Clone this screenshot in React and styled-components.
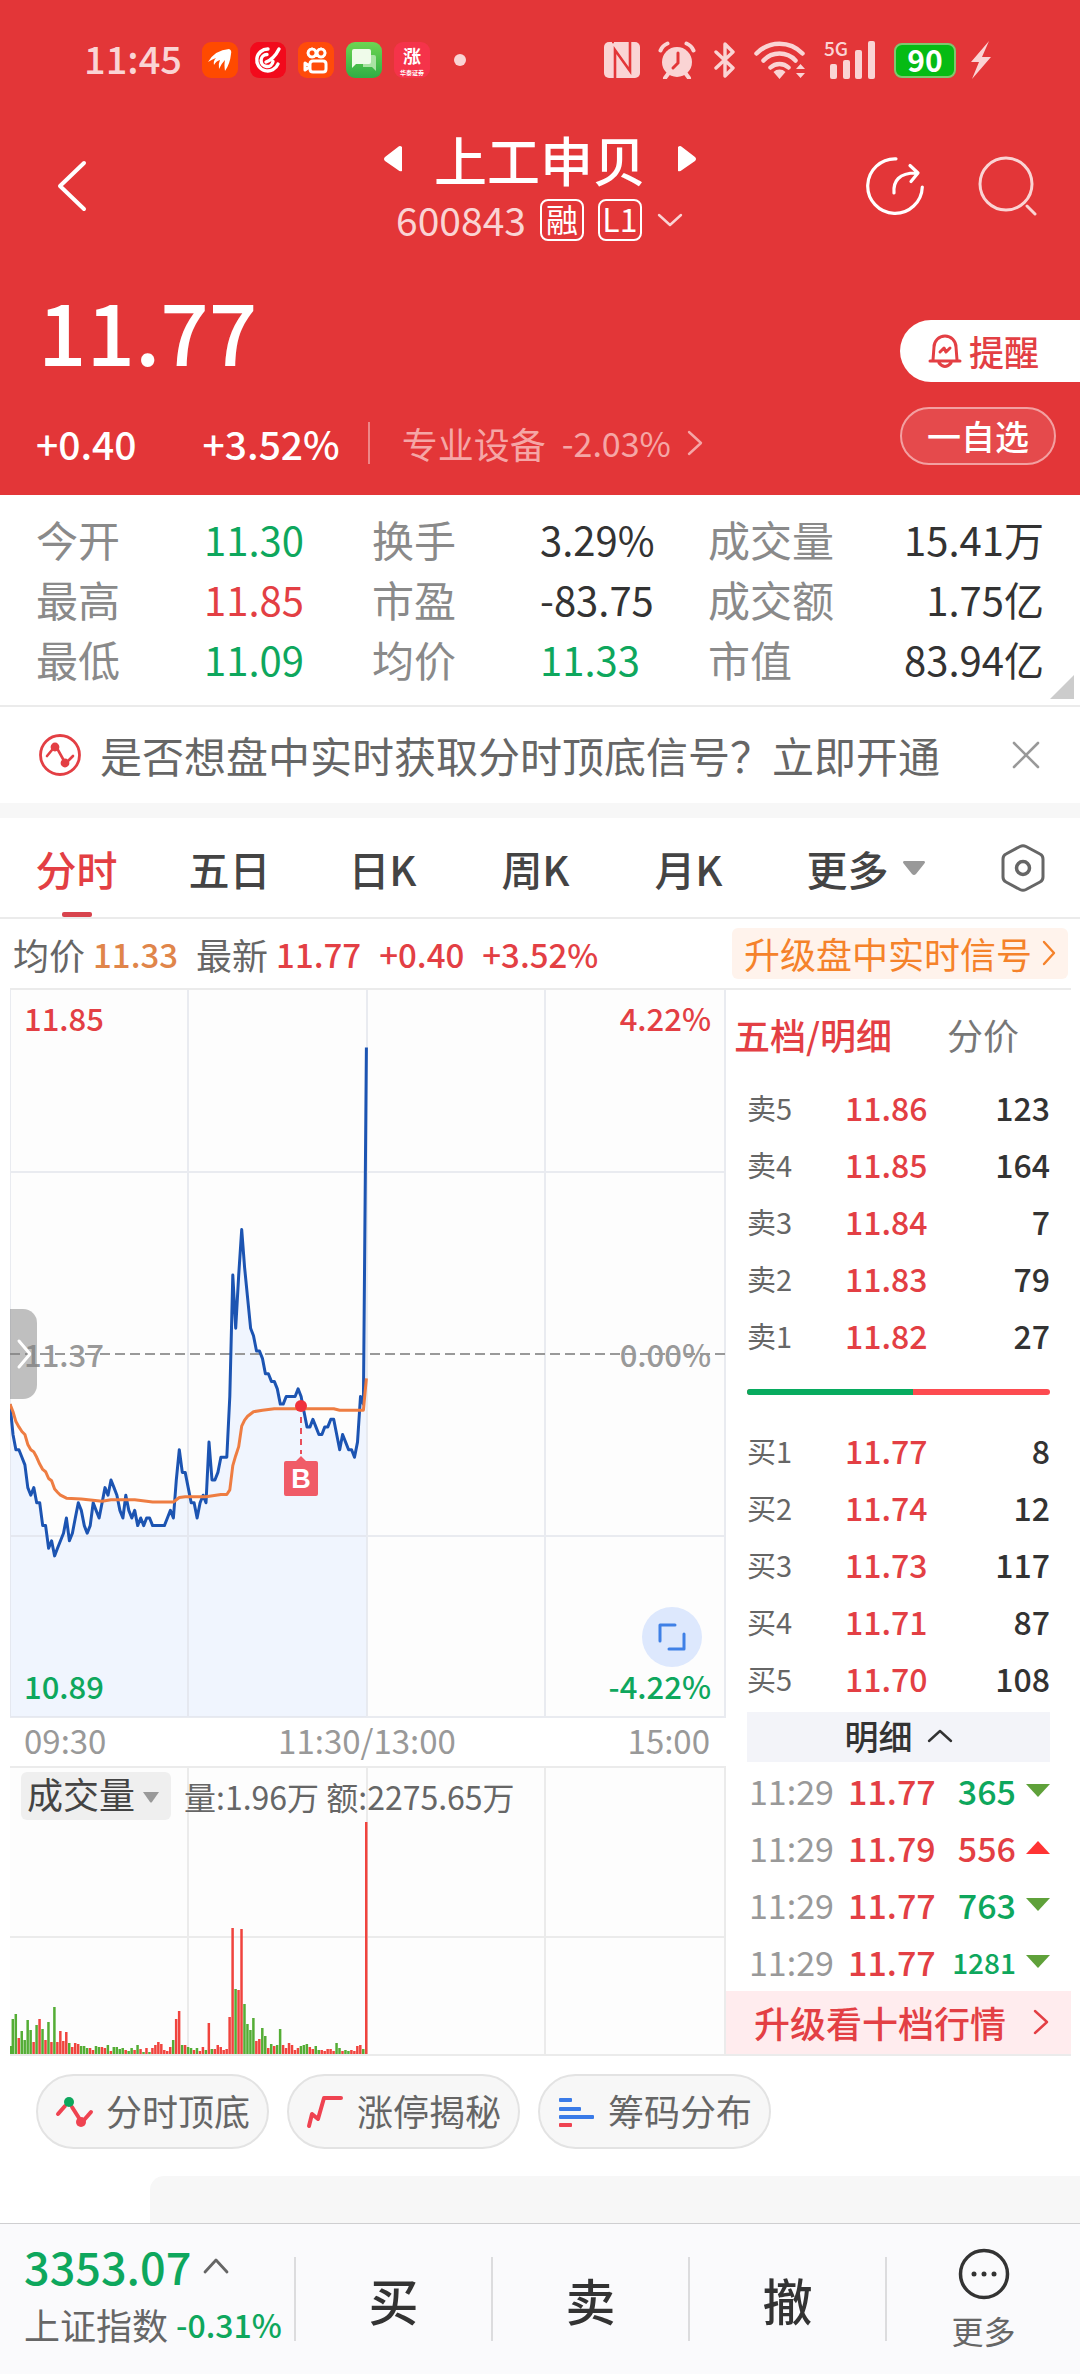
import React from "react";
import styled, { createGlobalStyle, css } from "styled-components";

const red = "#e33f44";
const green = "#0ea75d";
const line = "#ebebeb";
const pale = "#fad4d4";

const GlobalStyle = createGlobalStyle`
  *, *::before, *::after { box-sizing: border-box; }
  body { margin: 0; background: #fff; }
  body, button, select {
    font-family: "Noto Sans CJK SC", "Noto Sans", sans-serif;
    color: #333;
  }
  button { border: 0; padding: 0; background: none; cursor: pointer; }
  h1, p, dl, dd, dt { margin: 0; font-weight: 400; }
  a { text-decoration: none; color: inherit; }
  svg { display: block; flex: none; }
`;

const tones = {
  red,
  green,
  dark: "#333",
  grey: "#8a8a8a",
  mid: "#666",
  light: "#999",
  orange: "#e0854a",
};

const Page = styled.div`
  min-height: 100vh;
  display: flex;
  flex-direction: column;
`;

/* ---------- header ---------- */

const Header = styled.header`
  background: #e33638;
  color: #fff;
`;

const StatusBar = styled.div`
  height: 120px;
  padding: 0 88px 0 84px;
  display: flex;
  align-items: center;
  justify-content: space-between;
  color: ${pale};
`;

const StatusGroup = styled.div`
  display: flex;
  align-items: center;
  gap: ${(p) => p.$gap}px;
`;

const Clock = styled.span`
  font-size: 38px;
  line-height: 48px;
  font-weight: 500;
  margin-right: 8px;
  padding-bottom: 4px;
`;

const AppIcon = styled.span`
  width: 36px;
  height: 36px;
  border-radius: 9px;
  background: ${(p) => p.$bg};
  color: #fff;
  display: flex;
  flex-direction: column;
  align-items: center;
  justify-content: center;
  font-weight: 700;
`;

const AppGlyph = styled.span`
  font-size: 18px;
  line-height: 26px;
`;

const AppCaption = styled.span`
  font-size: 6px;
  line-height: 10px;
`;

const MoreDot = styled.span`
  width: 12px;
  height: 12px;
  border-radius: 50%;
  margin-left: 12px;
  background: ${pale};
`;

const Signal = styled.span`
  display: flex;
  align-items: flex-start;
  position: relative;
`;

const SignalLabel = styled.span`
  position: absolute;
  left: 0;
  top: -4px;
  font-size: 19px;
  line-height: 22px;
  font-weight: 500;
`;

const Battery = styled.span`
  width: 62px;
  height: 35px;
  border-radius: 8px;
  border: 2px solid #7fc76f;
  background: #06bb14;
  color: #fff;
  font-size: 30px;
  line-height: 28px;
  font-weight: 700;
  text-align: center;
`;

const TitleBar = styled.div`
  height: 132px;
  padding: 0 42px;
  display: grid;
  grid-template-columns: 1fr auto 1fr;
  align-items: center;
`;

const IconButton = styled.button`
  display: flex;
  align-items: center;
  justify-content: center;
  color: inherit;
`;

const BackSlot = styled.div`
  padding-left: 12px;
`;

const TitleBlock = styled.div`
  display: flex;
  flex-direction: column;
  align-items: center;
  gap: 10px;
`;

const TitleRow = styled.div`
  display: flex;
  align-items: center;
  gap: 32px;
`;

const Title = styled.h1`
  font-size: 53px;
  line-height: 58px;
  && { font-weight: 500; }
`;

const CodeRow = styled.div`
  display: flex;
  align-items: center;
  gap: 14px;
`;

const Code = styled.span`
  font-size: 39px;
  line-height: 42px;
  color: ${pale};
  padding-bottom: 2px;
`;

const Badge = styled.span`
  width: 44px;
  height: 42px;
  border: 2px solid #fff;
  border-radius: 8px;
  font-size: 32px;
  line-height: 34px;
  text-align: center;
`;

const Actions = styled.div`
  display: flex;
  justify-content: flex-end;
  gap: 54px;
`;

const Quote = styled.div`
  display: flex;
  justify-content: space-between;
  padding: 27px 0 28px 36px;
`;

const Price = styled.div`
  padding-left: 2px;
  font-size: 85px;
  line-height: 100px;
  font-weight: 500;
`;

const ChangeRow = styled.div`
  margin-top: 40px;
  display: flex;
  align-items: center;
  line-height: 48px;
  font-size: 39px;
  font-weight: 500;
`;

const ChangePercent = styled.span`
  margin-left: 66px;
`;

const Sector = styled.a`
  margin-left: 28px;
  padding-left: 32px;
  display: flex;
  align-items: center;
  gap: 16px;
  font-size: 36px;
  line-height: 42px;
  font-weight: 400;
  border-left: 2px solid rgba(255, 255, 255, 0.4);
  && { color: #f5a6a6; }
`;

const SectorChange = styled.span`
  font-size: 34px;
`;

const QuoteActions = styled.div`
  padding-top: 41px;
  display: flex;
  flex-direction: column;
  gap: 25px;
`;

const RemindButton = styled.button`
  width: 180px;
  height: 62px;
  padding-left: 28px;
  display: flex;
  align-items: center;
  gap: 7px;
  border-radius: 31px 0 0 31px;
  background: #fff;
  color: ${red};
  font-size: 35px;
  line-height: 44px;
  font-weight: 500;
`;

const WatchButton = styled.button`
  width: 156px;
  height: 58px;
  border-radius: 29px;
  border: 2px solid #f3a0a1;
  background: rgba(255, 255, 255, 0.1);
  color: #fff;
  font-size: 34px;
  line-height: 44px;
  font-weight: 500;
`;

/* ---------- stats and banner ---------- */

const Stats = styled.dl`
  position: relative;
  padding: 14px 36px 16px;
  display: grid;
  grid-template-columns: repeat(3, 1fr);
  border-bottom: 2px solid ${line};
`;

const Stat = styled.div`
  display: grid;
  grid-template-columns: 1fr 1fr;
  line-height: 60px;
  white-space: nowrap;
`;

const StatName = styled.dt`
  font-size: 42px;
  color: ${tones.grey};
`;

const StatValue = styled.dd`
  font-size: 40px;
  color: ${(p) => tones[p.$tone]};
  ${(p) => p.$end && css`justify-self: end;`}
`;

const Corner = styled.span`
  position: absolute;
  right: 6px;
  bottom: 6px;
  width: 24px;
  height: 24px;
  background: #ccc;
  clip-path: polygon(100% 0, 100% 100%, 0 100%);
`;

const Banner = styled.section`
  height: 96px;
  padding: 0 39px;
  display: flex;
  align-items: center;
  gap: 19px;
  font-size: 42px;
  line-height: 56px;
`;

const BannerText = styled.a`
  flex: 1;
  white-space: nowrap;
  && { color: #666; }
`;

const Band = styled.div`
  height: 15px;
  background: #f7f7f7;
`;

/* ---------- chart tabs ---------- */

const Tabs = styled.nav`
  height: 101px;
  display: grid;
  grid-template-columns: repeat(5, 153fr) 201fr 114fr;
  border-bottom: 2px solid ${line};
`;

const Tab = styled.button`
  position: relative;
  display: flex;
  align-items: center;
  justify-content: center;
  gap: 14px;
  font-size: 41px;
  line-height: 60px;
  font-weight: 500;
  color: #444;
  ${(p) =>
    p.$active &&
    css`
      color: ${red};
      &::after {
        content: "";
        position: absolute;
        left: calc(50% - 15px);
        bottom: 0;
        width: 30px;
        height: 5px;
        border-radius: 2px;
        background: #d8434d;
      }
    `}
`;

const InfoRow = styled.div`
  height: 69px;
  padding: 0 12px 0 13px;
  display: flex;
  align-items: center;
  justify-content: space-between;
`;

const InfoValues = styled.div`
  display: flex;
  align-items: center;
  gap: 18px;
  white-space: nowrap;
`;

const InfoPair = styled.span`
  display: flex;
  align-items: center;
  gap: 8px;
  font-size: 36px;
  line-height: 44px;
  color: #666;
`;

const InfoNumber = styled.span`
  font-size: 33px;
  line-height: 44px;
  font-weight: 500;
  color: ${(p) => tones[p.$tone]};
`;

const UpgradeSignal = styled.a`
  height: 51px;
  padding: 0 12px 2px;
  display: flex;
  align-items: center;
  gap: 10px;
  border-radius: 6px;
  background: #fff3ec;
  font-size: 36px;
  line-height: 46px;
  white-space: nowrap;
  && { color: #f5822a; }
`;

/* ---------- chart area ---------- */

const Board = styled.main`
  margin: 0 9px 0 10px;
  display: grid;
  grid-template-columns: 716fr 345fr;
  border-top: 2px solid ${line};
  border-bottom: 2px solid ${line};
`;

const Charts = styled.div`
  min-width: 0;
`;

const Pane = styled.div`
  position: relative;
  & > svg { width: 100%; height: auto; }
`;

const AxisLabel = styled.span`
  position: absolute;
  ${(p) => (p.$right ? "right: 15px;" : "left: 14px;")}
  ${(p) => (p.$at === "top" ? "top: 6px;" : "")}
  ${(p) => (p.$at === "middle" ? "top: calc(50% - 22px);" : "")}
  ${(p) => (p.$at === "bottom" ? "bottom: 10px;" : "")}
  font-size: 31px;
  line-height: 44px;
  font-weight: 500;
  color: ${(p) => tones[p.$tone]};
`;

const Drawer = styled.button`
  position: absolute;
  left: 0;
  top: calc(50% - 45px);
  width: 27px;
  height: 90px;
  border-radius: 0 14px 14px 0;
  background: rgba(130, 130, 130, 0.5);
  display: flex;
  align-items: center;
  justify-content: center;
  color: #fff;
`;

const Expand = styled.button`
  position: absolute;
  right: 24px;
  bottom: 51px;
  width: 60px;
  height: 60px;
  border-radius: 50%;
  background: #dde8fd;
  display: flex;
  align-items: center;
  justify-content: center;
`;

const TimeAxis = styled.div`
  height: 48px;
  padding: 0 16px 0 14px;
  display: grid;
  grid-template-columns: 1fr auto 1fr;
  font-size: 33px;
  line-height: 44px;
  color: ${tones.light};
  & > :last-child { justify-self: end; }
`;

const VolumeHead = styled.div`
  position: absolute;
  left: 11px;
  top: 6px;
  display: flex;
  align-items: center;
  gap: 13px;
  font-size: 32px;
  line-height: 44px;
  color: #666;
  white-space: nowrap;
`;

const VolumePicker = styled.label`
  position: relative;
  width: 150px;
  height: 48px;
  display: flex;
  align-items: center;
  border-radius: 6px;
  background: #efefef;
  & > svg { position: absolute; right: 12px; top: 20px; pointer-events: none; }
`;

const VolumeSelect = styled.select`
  appearance: none;
  width: 100%;
  height: 48px;
  padding: 0 0 6px 6px;
  border: 0;
  background: none;
  font-size: 36px;
  line-height: 42px;
  color: #444;
`;

/* ---------- order book ---------- */

const Book = styled.aside`
  min-width: 0;
  display: flex;
  flex-direction: column;
`;

const BookTabs = styled.div`
  height: 88px;
  padding: 0 52px 0 8px;
  display: flex;
  align-items: center;
  justify-content: space-between;
`;

const BookTab = styled.button`
  font-size: 36px;
  line-height: 46px;
  font-weight: ${(p) => (p.$active ? 500 : 400)};
  color: ${(p) => (p.$active ? red : "#777")};
`;

const Inset = styled.div`
  padding: 0 21px 0 21px;
`;

const Table = styled.table`
  width: 100%;
  border-collapse: collapse;
  table-layout: fixed;
`;

const Row = styled.tr`
  height: 57px;
`;

const Cell = styled.td`
  padding: 0 0 0 ${(p) => p.$pad || 0}px;
  width: ${(p) => (p.$w ? `${p.$w}px` : "auto")};
  text-align: ${(p) => (p.$end ? "right" : "left")};
  font-size: ${(p) => p.$size || 32}px;
  line-height: 44px;
  font-weight: ${(p) => p.$weight || 500};
  color: ${(p) => tones[p.$tone]};
  & > svg { margin-left: auto; }
`;

const Ratio = styled.div`
  height: 6px;
  margin: 26px 0;
  border-radius: 3px;
  overflow: hidden;
  display: grid;
  grid-template-columns: 166fr 137fr;
  background: #fd4b50;
  &::before { content: ""; background: #07ab5f; }
`;

const DetailToggle = styled.button`
  width: 100%;
  height: 50px;
  margin-top: 6px;
  padding-bottom: 2px;
  display: flex;
  align-items: center;
  justify-content: center;
  gap: 14px;
  background: #f3f4f9;
  font-size: 34px;
  line-height: 46px;
  font-weight: 500;
`;

const UpgradeBook = styled.a`
  height: 63px;
  margin-top: auto;
  padding: 0 22px 2px 28px;
  display: flex;
  align-items: center;
  justify-content: space-between;
  background: #ffecee;
  font-size: 36px;
  line-height: 46px;
  font-weight: 500;
  white-space: nowrap;
  && { color: ${red}; }
`;

/* ---------- chips and footer ---------- */

const Chips = styled.div`
  padding: 18px 36px 27px;
  display: flex;
  gap: 18px;
`;

const Chip = styled.button`
  height: 75px;
  padding: 0 17px 0 16px;
  display: flex;
  align-items: center;
  gap: 12px;
  border: 2px solid #e3e3e3;
  border-radius: 38px;
  background: #f7f7f7;
  font-size: 36px;
  line-height: 46px;
  white-space: nowrap;
  color: #666;
`;

const ChipText = styled.span`
  padding-bottom: 3px;
`;

const NextCard = styled.section`
  flex: 1;
  min-height: 47px;
  margin-left: 150px;
  border-radius: 14px 0 0 0;
  background: #f7f7f7;
`;

const Footer = styled.footer`
  position: sticky;
  bottom: 0;
  height: 151px;
  display: grid;
  grid-template-columns: 294fr 197fr 197fr 197fr 195fr;
  align-items: center;
  border-top: 1px solid #cfcfd1;
  background: #fafafc;
`;

const IndexLink = styled.a`
  padding: 0 0 12px 24px;
  display: flex;
  flex-direction: column;
  gap: 10px;
  white-space: nowrap;
`;

const IndexRow = styled.span`
  display: flex;
  align-items: center;
  gap: ${(p) => p.$gap}px;
  height: ${(p) => p.$h}px;
  line-height: ${(p) => p.$h}px;
`;

const IndexValue = styled.span`
  font-size: 45px;
  font-weight: 500;
  color: ${green};
`;

const IndexName = styled.span`
  font-size: 36px;
  color: #666;
`;

const IndexChange = styled.span`
  font-size: 32px;
  font-weight: 500;
  color: ${green};
`;

const TradeButton = styled.button`
  height: 84px;
  border-left: 2px solid #dcdcde;
  font-size: 50px;
  line-height: 76px;
  font-weight: 500;
`;

const MoreButton = styled.button`
  height: 84px;
  border-left: 2px solid #dcdcde;
  display: flex;
  flex-direction: column;
  align-items: center;
  justify-content: center;
  gap: 10px;
  font-size: 32px;
  line-height: 40px;
  color: #666;
`;

/* ---------- icons ---------- */

const Stroke = ({ w, h, d, sw = 3, color = "currentColor" }) => (
  <svg width={w} height={h} viewBox={`0 0 ${w} ${h}`} fill="none" stroke={color} strokeWidth={sw} strokeLinecap="round" strokeLinejoin="round" aria-hidden="true">
    <path d={d} />
  </svg>
);

const Fill = ({ w, h, d, color = "currentColor" }) => (
  <svg width={w} height={h} viewBox={`0 0 ${w} ${h}`} fill={color} aria-hidden="true">
    <path d={d} />
  </svg>
);

const StatusIcons = () => (
  <>
    <svg width="36" height="36" viewBox="0 0 36 36">
      <rect width="36" height="36" rx="5" fill={pale} />
      <path stroke="#e33638" strokeWidth="2.600" fill="none" d="M11 36V8l15 21V0M8 0l2 0" />
    </svg>
    <svg width="38" height="38" viewBox="0 0 38 38">
      <circle cx="19" cy="21" r="15" fill={pale} />
      <path stroke={pale} strokeWidth="4" strokeLinecap="round" fill="none" d="M2.500 9.500q2-5 7-7M35.500 9.500q-2-5-7-7M10 33l-3 4M28 33l3 4" />
      <path stroke="#e33638" strokeWidth="3" strokeLinecap="round" fill="none" d="M20 12v10l-5 5" />
    </svg>
    <svg width="22" height="38" viewBox="0 0 22 38">
      <path stroke={pale} strokeWidth="3.400" fill="none" strokeLinejoin="round" strokeLinecap="round" d="M2 11l17 16-8 8V3l8 8L2 27" />
    </svg>
    <svg width="52" height="40" viewBox="0 0 52 40">
      <g stroke={pale} strokeWidth="4.500" fill="none" strokeLinecap="round">
        <path d="M2.500 13.500a32 32 0 0 1 46 0M9.500 20.500a22 22 0 0 1 32 0M16.500 27.500a13 13 0 0 1 18 0" />
      </g>
      <path fill={pale} d="M25.500 39l-6-7a8.500 8.500 0 0 1 12 0zM42 29l4.500-5 4.500 5zM42 33l4.500 5 4.500-5z" />
    </svg>
  </>
);

const Share = () => (
  <svg width="58" height="58" viewBox="0 0 58 58" fill="none" stroke="#fff" strokeWidth="3.200" strokeLinecap="round" strokeLinejoin="round" aria-hidden="true">
    <path d="M30 1.800A27.300 27.300 0 1 0 56.300 30" />
    <path d="M28 36c-1-12 5-20 22-20M44 8.500l8 7.500-7 8.500" />
  </svg>
);

const Search = () => (
  <svg width="60" height="60" viewBox="0 0 60 60" fill="none" stroke={pale} strokeWidth="3" strokeLinecap="round" aria-hidden="true">
    <circle cx="28" cy="28" r="26" />
    <path d="M49 50l8 8" />
  </svg>
);

const Bell = () => (
  <svg width="34" height="36" viewBox="0 0 34 36" fill="none" stroke={red} strokeWidth="3" strokeLinecap="round" strokeLinejoin="round" aria-hidden="true">
    <path d="M2 28h30M5 27l1-13a11 11 0 0 1 22 0l1 13M11 30q6 7 12 0M12 19l4-4 2 4 4-4" />
  </svg>
);

const SignalIcon = () => (
  <svg width="42" height="42" viewBox="0 0 42 42" fill="none" stroke={red} strokeWidth="2.800" strokeLinecap="round" strokeLinejoin="round" aria-hidden="true">
    <circle cx="21" cy="21" r="19.500" />
    <path d="M8 22l5-6M19 16l5 9M29 27l5-5" strokeWidth="2.600" />
    <circle cx="16" cy="13" r="3" fill={red} />
    <circle cx="26" cy="29" r="3" fill={red} />
  </svg>
);

const Hexagon = () => (
  <svg width="44" height="48" viewBox="0 0 44 48" fill="none" stroke="#666" strokeWidth="3" strokeLinejoin="round" aria-hidden="true">
    <path d="M19 2.500q3-1.500 6 0l14 7.500q3 1.500 3 5v18q0 3.500-3 5l-14 7.500q-3 1.500-6 0L5 38q-3-1.500-3-5V15q0-3.500 3-5z" />
    <circle cx="22" cy="24" r="6.500" strokeWidth="3.500" />
  </svg>
);

/* ---------- chart data ---------- */

// Ticks of 0.01 below the previous close, one for each minute from 09:30.
const priceTicks = [
  7, 11, 13, 13, 14, 15, 18, 19, 18, 20, 20, 23, 23, 26, 25, 27, 26, 25, 24, 22, 25, 24, 22, 20, 21, 23, 24, 23, 20, 21,
  22, 20, 18, 19, 17, 18, 19, 21, 22, 19, 21, 22, 21, 23, 22, 23, 22, 22, 23, 23, 23, 23, 23, 22, 21, 22, 17, 13, 16, 16,
  18, 20, 20, 22, 20, 19, 20, 12, 17, 17, 16, 14, 14, 14, 6, -10, -3, -10, -16, -11, -7, -3, -2, 0, 0, 1, 3, 3, 4, 4,
  5, 7, 7, 6, 6, 6, 6, 5, 6, 8, 10, 10, 9, 10, 11, 11, 10, 10, 9, 9, 11, 13, 11, 12, 13, 13, 14, 12, 6, 7, -40,
];

const averageTicks = [
  [0, 7], [1, 8], [2, 9.3], [3, 10], [4, 10.6], [5, 11], [6, 12.3], [7, 13], [8, 13.3], [9, 14], [10, 14.9], [11, 15.6],
  [12, 15.9], [13, 16.8], [14, 17.1], [15, 18.2], [16, 18.6], [17, 19], [19, 19.4], [24, 19.5], [31, 19.8], [34, 19.6],
  [42, 19.6], [48, 19.9], [55, 19.9], [57, 19.3], [59, 19.2], [66, 19.2], [71, 18.9], [73, 18.9], [74, 18.3], [75, 15.1],
  [76, 13.8], [77, 12.6], [78, 9.9], [79, 9.1], [80, 8.6], [82, 8], [85, 7.8], [89, 7.6], [109, 7.6], [111, 7.8],
  [119, 7.8], [120, 3.6],
];

const volumes =
  "g8 g35 g40 r16 g23 g14 g34 g24 r12 g29 r35 g25 r14 g32 r12 g47 r12 r23 r13 r22 g11 r7 r11 r10 g8 g8 g6 r6 r4 g8 g7 r7 r6 g9 r3 g7 g7 g5 g6 r4 g3 g6 r4 g9 r5 g2 r6 g2 r6 r9 r12 r10 r4 r3 r7 g14 r35 r43 g9 r9 g7 g6 r4 g6 r3 r7 g4 r31 g5 r5 r9 r7 r4 r5 r37 r126 g65 r64 r125 g50 g30 g24 g36 r13 r15 g26 g18 r6 g10 r8 g9 g25 r9 r6 r11 r9 r4 r6 g8 g9 g10 r7 r5 g8 g4 r4 r3 r5 r5 r3 g11 g6 r3 g4 g3 r4 r3 r8 r9 g5 r232"
    .split(" ")
    .map((v) => ({ up: v[0] === "r", size: Number(v.slice(1)) }));

const minuteX = (m) => m * 2.97;
const tickY = (t) => 361 + t * 7.59;
const toPoints = (pairs) => pairs.map(([m, t]) => `${minuteX(m).toFixed(1)},${tickY(t).toFixed(1)}`).join(" ");

const pricePoints = toPoints(priceTicks.map((t, m) => [m, t]));
const averagePoints = toPoints(averageTicks);

const PriceChart = () => (
  <svg viewBox="0 0 716 728" aria-label="分时走势">
    <rect width="716" height="728" fill="#fdfdfd" />
    <polygon points={`0,727 ${pricePoints} ${minuteX(120)},727`} fill="#f0f5fe" />
    <g stroke="#dfe3ea" strokeOpacity="0.7" strokeWidth="2" fill="none">
      <path d="M0 0V727M178 0V727M357 0V727M535 0V727M715 0V727M0 182H716M0 546H716M0 727H716" />
    </g>
    <path d="M0 364H716" stroke="#999" strokeWidth="2" strokeDasharray="10 5" />
    <polyline points={pricePoints} fill="none" stroke="#1c54b2" strokeWidth="3" strokeLinejoin="round" />
    <polyline points={averagePoints} fill="none" stroke="#ee7d42" strokeWidth="3" strokeLinejoin="round" />
    <circle cx="291" cy="416" r="6" fill="#f0323c" />
    <path d="M291 427V464" stroke="#e8505b" strokeWidth="2" strokeDasharray="6 5" />
    <path d="M276 471h10l5-5 5 5h10a2 2 0 0 1 2 2v31a2 2 0 0 1-2 2h-30a2 2 0 0 1-2-2v-31a2 2 0 0 1 2-2z" fill="#f05b67" />
    <text x="291" y="498" textAnchor="middle" fontSize="27" fontWeight="700" fontFamily="Liberation Sans, sans-serif" fill="#fff">B</text>
  </svg>
);

const VolumeChart = () => (
  <svg viewBox="0 0 716 288" aria-label="成交量">
    <rect width="716" height="288" fill="#fdfdfd" />
    <path d="M0 1H716M0 171H716M178 0V288M357 0V288M535 0V288M715 0V288" stroke={line} strokeWidth="2" fill="none" />
    {volumes.map((v, m) => (
      <rect key={m} x={Math.max(0, minuteX(m) - 1.4)} y={288 - v.size} width="2.500" height={v.size} fill={v.up ? "#f0443e" : "#54ad35"} />
    ))}
  </svg>
);

/* ---------- content ---------- */

const stats = [
  ["今开", "11.30", "green"], ["换手", "3.29%", "dark"], ["成交量", "15.41万", "dark"],
  ["最高", "11.85", "red"], ["市盈", "-83.75", "dark"], ["成交额", "1.75亿", "dark"],
  ["最低", "11.09", "green"], ["均价", "11.33", "green"], ["市值", "83.94亿", "dark"],
];

const asks = [["卖5", "11.86", 123], ["卖4", "11.85", 164], ["卖3", "11.84", 7], ["卖2", "11.83", 79], ["卖1", "11.82", 27]];
const bids = [["买1", "11.77", 8], ["买2", "11.74", 12], ["买3", "11.73", 117], ["买4", "11.71", 87], ["买5", "11.70", 108]];
const trades = [["11.77", 365, false], ["11.79", 556, true], ["11.77", 763, false], ["11.77", 1281, false]];

const Orders = ({ rows }) => (
  <Table>
    <tbody>
      {rows.map(([name, price, count]) => (
        <Row key={name}>
          <Cell $w={98} $size={29} $weight={400} $tone="mid">{name}</Cell>
          <Cell $w={90} $tone="red">{price}</Cell>
          <Cell $end $tone="dark">{count}</Cell>
        </Row>
      ))}
    </tbody>
  </Table>
);

export default function App() {
  return (
    <Page>
      <GlobalStyle />
      <Header>
        <StatusBar>
          <StatusGroup $gap={12}>
            <Clock>11:45</Clock>
            <AppIcon $bg="#ff4a00">
              <Fill w={26} h={26} d="M1 15Q8 3 22 2q3 1 2 5-1 10-6 17-1-7 0-11-4 4-6 9-1-5 1-9-4 1-6 5-1-4 2-7-3 1-8 4z" />
            </AppIcon>
            <AppIcon $bg="#f20a1c">
              <Stroke w={28} h={28} sw={3.4} d="M14 3a11 11 0 1 0 10 15M13 8.500a6 6 0 1 0 6 7M12 16q8-3 13-13" />
            </AppIcon>
            <AppIcon $bg="#ff4b0a">
              <Stroke w={26} h={28} sw={3} d="M9 3a4 4 0 1 0 .1 0M18 3a4 4 0 1 0 .1 0M10 15h10q3 0 3 3v5q0 3-3 3H10q-3 0-3-3v-5q0-3 3-3M2 17v7l5-3.500z" />
            </AppIcon>
            <AppIcon $bg="linear-gradient(#6ed552, #2fae45)">
              <svg width="28" height="28" viewBox="0 0 28 28">
                <path fill="#a9e3a4" d="M13 9h11q2 0 2 2v14l-4-4H13z" />
                <path fill="#effbea" d="M4 3h15q2 0 2 2v11q0 2-2 2H6l-4 4V5q0-2 2-2z" />
              </svg>
            </AppIcon>
            <AppIcon $bg="#f5334a">
              <AppGlyph>涨</AppGlyph>
              <AppCaption>华泰证券</AppCaption>
            </AppIcon>
            <MoreDot />
          </StatusGroup>
          <StatusGroup $gap={18}>
            <StatusIcons />
            <Signal>
              <SignalLabel>5G</SignalLabel>
              <svg width="52" height="38" viewBox="0 0 52 38" fill={pale}>
                <rect x="6" y="23" width="7" height="15" rx="2" />
                <rect x="19" y="19" width="7" height="19" rx="2" />
                <rect x="31" y="9" width="7" height="29" rx="2" />
                <rect x="44" y="0" width="7" height="38" rx="2" />
              </svg>
            </Signal>
            <StatusGroup $gap={14}>
              <Battery>90</Battery>
              <Fill w={22} h={38} d="M19 0L1 21h8L2 38l19-22h-9z" />
            </StatusGroup>
          </StatusGroup>
        </StatusBar>

        <TitleBar>
          <BackSlot>
            <IconButton aria-label="返回"><Stroke w={34} h={52} sw={4} d="M30 3L6 26l24 23" /></IconButton>
          </BackSlot>
          <TitleBlock>
            <TitleRow>
              <IconButton aria-label="上一只"><Fill w={18} h={28} d="M18 2v24q-2 1-4-1L1 16q-2-2 0-4L14 2q2-2 4 0z" /></IconButton>
              <Title>上工申贝</Title>
              <IconButton aria-label="下一只"><Fill w={18} h={28} d="M0 2v24q2 1 4-1l13-9q2-2 0-4L4 2Q2 0 0 2z" /></IconButton>
            </TitleRow>
            <CodeRow>
              <Code>600843</Code>
              <Badge>融</Badge>
              <Badge>L1</Badge>
              <Stroke w={28} h={16} sw={2.4} color={pale} d="M3 3l11 10L25 3" />
            </CodeRow>
          </TitleBlock>
          <Actions>
            <IconButton aria-label="分享"><Share /></IconButton>
            <IconButton aria-label="搜索"><Search /></IconButton>
          </Actions>
        </TitleBar>

        <Quote>
          <div>
            <Price>11.77</Price>
            <ChangeRow>
              <span>+0.40</span>
              <ChangePercent>+3.52%</ChangePercent>
              <Sector href="#sector">
                专业设备
                <SectorChange>-2.03%</SectorChange>
                <Stroke w={16} h={26} sw={2.4} d="M2 2l12 11L2 24" />
              </Sector>
            </ChangeRow>
          </div>
          <QuoteActions>
            <RemindButton><Bell />提醒</RemindButton>
            <WatchButton>一自选</WatchButton>
          </QuoteActions>
        </Quote>
      </Header>

      <Stats>
        {stats.map(([name, value, tone], i) => (
          <Stat key={name}>
            <StatName>{name}</StatName>
            <StatValue $tone={tone} $end={i % 3 === 2}>{value}</StatValue>
          </Stat>
        ))}
        <Corner />
      </Stats>

      <Banner>
        <SignalIcon />
        <BannerText href="#open">是否想盘中实时获取分时顶底信号？立即开通</BannerText>
        <IconButton aria-label="关闭"><Stroke w={30} h={30} sw={2.6} color="#999" d="M3 3l24 24M27 3L3 27" /></IconButton>
      </Banner>
      <Band />

      <Tabs>
        <Tab $active>分时</Tab>
        <Tab>五日</Tab>
        <Tab>日K</Tab>
        <Tab>周K</Tab>
        <Tab>月K</Tab>
        <Tab aria-haspopup="menu">更多<Fill w={22} h={14} color="#999" d="M1 0h20q2 1 0 3l-8 10q-2 2-4 0L1 3q-2-2 0-3z" /></Tab>
        <Tab aria-label="设置"><Hexagon /></Tab>
      </Tabs>

      <InfoRow>
        <InfoValues>
          <InfoPair>均价<InfoNumber $tone="orange">11.33</InfoNumber></InfoPair>
          <InfoPair>最新<InfoNumber $tone="red">11.77</InfoNumber></InfoPair>
          <InfoNumber $tone="red">+0.40</InfoNumber>
          <InfoNumber $tone="red">+3.52%</InfoNumber>
        </InfoValues>
        <UpgradeSignal href="#signal">
          升级盘中实时信号
          <Stroke w={14} h={26} sw={2.4} d="M2 2l10 11L2 24" />
        </UpgradeSignal>
      </InfoRow>

      <Board>
        <Charts>
          <Pane>
            <PriceChart />
            <AxisLabel $at="top" $tone="red">11.85</AxisLabel>
            <AxisLabel $at="top" $right $tone="red">4.22%</AxisLabel>
            <AxisLabel $at="middle" $tone="light">11.37</AxisLabel>
            <AxisLabel $at="middle" $right $tone="light">0.00%</AxisLabel>
            <AxisLabel $at="bottom" $tone="green">10.89</AxisLabel>
            <AxisLabel $at="bottom" $right $tone="green">-4.22%</AxisLabel>
            <Drawer aria-label="展开"><Stroke w={16} h={32} sw={3} d="M3 3l11 13L3 29" /></Drawer>
            <Expand aria-label="全屏"><Stroke w={30} h={30} sw={3} color="#3f80e6" d="M18 3H3v16M12 27h15V12" /></Expand>
          </Pane>
          <TimeAxis>
            <span>09:30</span>
            <span>11:30/13:00</span>
            <span>15:00</span>
          </TimeAxis>
          <Pane>
            <VolumeChart />
            <VolumeHead>
              <VolumePicker>
                <VolumeSelect aria-label="指标">
                  <option>成交量</option>
                </VolumeSelect>
                <Fill w={16} h={11} color="#999" d="M0 0h16L9 10q-1 1-2 0z" />
              </VolumePicker>
              <span>量:1.96万 额:2275.65万</span>
            </VolumeHead>
          </Pane>
        </Charts>

        <Book>
          <BookTabs>
            <BookTab $active>五档/明细</BookTab>
            <BookTab>分价</BookTab>
          </BookTabs>
          <Inset>
            <Orders rows={asks} />
            <Ratio />
            <Orders rows={bids} />
            <DetailToggle>明细<Stroke w={26} h={14} sw={2.4} d="M2 12L13 2l11 10" /></DetailToggle>
            <Table>
              <tbody>
                {trades.map(([price, count, up], i) => (
                  <Row key={i}>
                    <Cell $w={101} $size={34} $pad={2} $weight={400} $tone="light">11:29</Cell>
                    <Cell $w={86} $size={34} $tone="red">{price}</Cell>
                    <Cell $end $size={count > 999 ? 28 : 34} $tone={up ? "red" : "green"}>{count}</Cell>
                    <Cell $w={34}>
                      <Fill w={24} h={13} color={up ? "#ff3434" : "#5fa13a"} d={up ? "M0 13L12 0l12 13z" : "M0 0h24L12 13z"} />
                    </Cell>
                  </Row>
                ))}
              </tbody>
            </Table>
          </Inset>
          <UpgradeBook href="#levels">
            升级看十档行情
            <Stroke w={16} h={26} sw={2.4} d="M2 2l12 11L2 24" />
          </UpgradeBook>
        </Book>
      </Board>

      <Chips>
        <Chip>
          <svg width="40" height="36" viewBox="0 0 40 36" fill="none" stroke="#ef4351" strokeWidth="4" strokeLinecap="round" aria-hidden="true">
            <path d="M4 20l7-8M18 13l7 11M30 26l7-8" />
            <circle cx="15" cy="8" r="5" fill="#0ea75d" stroke="none" />
            <circle cx="27" cy="28" r="5" fill="#ef4351" stroke="none" />
          </svg>
          <ChipText>分时顶底</ChipText>
        </Chip>
        <Chip>
          <Stroke w={40} h={36} sw={4} color="#ef4351" d="M4 32l3-12 6 5 6-21h17" />
          <ChipText>涨停揭秘</ChipText>
        </Chip>
        <Chip>
          <svg width="40" height="36" viewBox="0 0 40 36" fill="#3a7be8" aria-hidden="true">
            <rect x="3" y="4" width="13" height="4" rx="1" />
            <rect x="3" y="13" width="22" height="4" rx="1" />
            <rect x="3" y="21" width="35" height="4" rx="1" />
            <rect x="3" y="29" width="13" height="4" rx="1" fill="#ef4351" />
          </svg>
          <ChipText>筹码分布</ChipText>
        </Chip>
      </Chips>
      <NextCard />

      <Footer>
        <IndexLink href="#index">
          <IndexRow $gap={12} $h={52}>
            <IndexValue>3353.07</IndexValue>
            <Stroke w={26} h={16} sw={2.8} color="#666" d="M2 14L13 2l11 12" />
          </IndexRow>
          <IndexRow $gap={8} $h={44}>
            <IndexName>上证指数</IndexName>
            <IndexChange>-0.31%</IndexChange>
          </IndexRow>
        </IndexLink>
        <TradeButton>买</TradeButton>
        <TradeButton>卖</TradeButton>
        <TradeButton>撤</TradeButton>
        <MoreButton>
          <svg width="52" height="52" viewBox="0 0 52 52" fill="#333" aria-hidden="true">
            <circle cx="26" cy="26" r="23.500" fill="none" stroke="#333" strokeWidth="3.500" />
            <circle cx="16" cy="26" r="2.500" />
            <circle cx="26" cy="26" r="2.500" />
            <circle cx="36" cy="26" r="2.500" />
          </svg>
          更多
        </MoreButton>
      </Footer>
    </Page>
  );
}
